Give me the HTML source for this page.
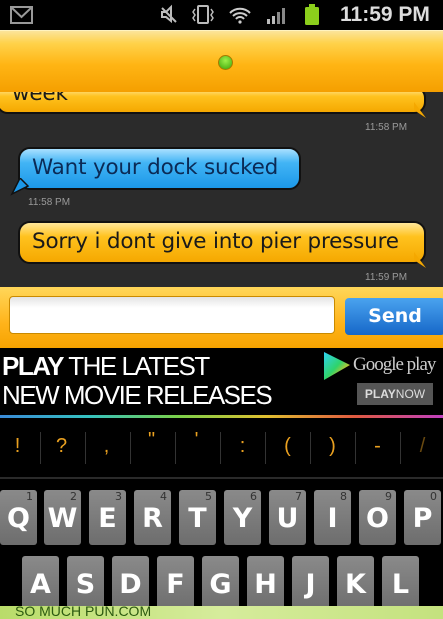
<!DOCTYPE html>
<html><head><style>
*{margin:0;padding:0;box-sizing:border-box}
body{width:443px;height:619px;overflow:hidden;background:#000;font-family:"Liberation Sans",sans-serif;position:relative}
.a{position:absolute}
.sb{top:0;left:0;width:443px;height:30px;background:#000}
.hdr{top:30px;left:0;width:443px;height:62px;background:linear-gradient(#fbe49a 0,#ffd24a 20%,#ffb514 55%,#f59f00 100%);border-top:1px solid #fff3c0}
.chat{top:92px;left:0;width:443px;height:195px;background:#2b2b2b}
.bub{border-radius:12px;border:2px solid #111;font-family:"DejaVu Sans",sans-serif;font-size:21.5px;color:#1a1a1a;padding-left:12px;line-height:38px;white-space:nowrap;letter-spacing:-0.2px}
.or{background:linear-gradient(#ffe79a 0,#ffc21e 35%,#f5a800 100%)}
.bl{background:linear-gradient(#a9e0ff 0,#42b4f5 35%,#1c98e8 100%);color:#0b2a55}
.ts{font-size:10px;color:#9a9a9a}
.inb{top:287px;left:0;width:443px;height:61px;background:linear-gradient(#ffd75a,#ffb31a 60%,#f6a300)}
.kb{position:absolute;width:37px;height:55px;background:linear-gradient(#8a8a8a,#6d6d6d);border-radius:3px;color:#fff;font-weight:bold;font-size:27px;text-align:center;line-height:58px;font-family:"DejaVu Sans",sans-serif}
.kb i{position:absolute;top:1px;right:4px;font-style:normal;font-size:11px;line-height:12px;color:#333;font-weight:normal}
.sym{position:absolute;top:435px;color:#e9a020;font-size:20px;width:45px;text-align:center}
.sep{position:absolute;top:432px;width:1px;height:32px;background:#333}
</style></head><body>
<div class="a sb"></div>
<svg class="a" style="left:10px;top:5px" width="24" height="20"><rect x="1" y="2" width="21" height="16" fill="none" stroke="#999" stroke-width="2"/><path d="M2 3 L11.5 12 L21 3" fill="none" stroke="#999" stroke-width="2"/></svg>
<svg class="a" style="left:158px;top:4px" width="170" height="22">
<path d="M4 4 L18 18 M4 8 h4 l5-5 v14 l-5-4 h-4z" stroke="#bbb" stroke-width="2" fill="none"/>
<rect x="40" y="2" width="10" height="17" rx="1" fill="none" stroke="#bbb" stroke-width="2"/><path d="M37 5 l-2 3 2 3 -2 3 2 3 M53 5 l2 3 -2 3 2 3 -2 3" stroke="#bbb" fill="none" stroke-width="1.5"/>
<path d="M72 9 a14 14 0 0 1 20 0 M75 12 a10 10 0 0 1 14 0 M78 15 a5 5 0 0 1 8 0" stroke="#ccc" stroke-width="2" fill="none"/><circle cx="82" cy="18" r="1.6" fill="#ccc"/>
<rect x="109" y="15" width="3" height="5" fill="#bbb"/><rect x="114" y="12" width="3" height="8" fill="#bbb"/><rect x="119" y="8" width="3" height="12" fill="#888"/><rect x="124" y="4" width="3" height="16" fill="#888"/>
<rect x="147" y="3" width="14" height="18" rx="1.5" fill="#8ccf1c"/><rect x="151" y="0" width="6" height="3" fill="#8ccf1c"/>
</svg>
<div class="a" style="left:340px;top:3px;color:#ddd;font-weight:bold;font-size:21px">11:59 PM</div>
<div class="a chat"></div>
<div class="a bub or" style="left:-4px;top:86px;width:430px;height:28px;line-height:12px;padding-left:14px;overflow:hidden">week</div>
<div class="a hdr"></div>
<div class="a" style="left:218px;top:55px;width:15px;height:15px;border-radius:50%;background:radial-gradient(circle at 50% 35%,#9ef04a,#3aa40a);border:1px solid #a77a00"></div>
<div class="a ts" style="left:365px;top:122px">11:58 PM</div>
<div class="a bub bl" style="left:18px;top:147px;width:283px;height:43px">Want your dock sucked</div>
<svg class="a" style="left:10px;top:178px" width="22" height="18"><path d="M10 0 L2 16 L18 8z" fill="#1c98e8" stroke="#111" stroke-width="1.5"/></svg>
<div class="a ts" style="left:28px;top:197px">11:58 PM</div>
<div class="a bub or" style="left:18px;top:221px;width:408px;height:43px">Sorry i dont give into pier pressure</div>
<svg class="a" style="left:412px;top:252px" width="18" height="20"><path d="M2 0 L14 16 L2 8z" fill="#f5a800"/></svg>
<svg class="a" style="left:412px;top:102px" width="18" height="20"><path d="M2 0 L14 16 L2 8z" fill="#f5a800"/></svg>
<div class="a ts" style="left:365px;top:272px">11:59 PM</div>
<div class="a inb"></div>
<div class="a" style="left:9px;top:296px;width:326px;height:38px;background:linear-gradient(#e4e4e4,#fff 30%);border-radius:4px;border:1px solid #c98a00"></div>
<div class="a" style="left:345px;top:298px;width:100px;height:37px;background:linear-gradient(#4aa3ef,#1667c8);border-radius:4px;color:#fff;font-weight:bold;font-size:19px;text-align:center;line-height:37px;font-family:'DejaVu Sans',sans-serif">Send</div>
<div class="a" style="left:0;top:348px;width:443px;height:70px;background:#000"></div>
<div class="a" style="left:2px;top:352px;color:#fff;font-size:26px;line-height:29px;letter-spacing:-1.5px;white-space:nowrap"><b>PLAY</b> THE LATEST<br>NEW MOVIE RELEASES</div>
<svg class="a" style="left:323px;top:351px" width="28" height="30"><path d="M1 1 L27 14 L1 29z" fill="url(#g)"/><defs><linearGradient id="g" x1="0" y1="0" x2="1" y2="1"><stop offset="0" stop-color="#2ed3f5"/><stop offset=".5" stop-color="#2fd36a"/><stop offset=".8" stop-color="#f4c01a"/><stop offset="1" stop-color="#e8463a"/></linearGradient></defs></svg>
<div class="a" style="left:353px;top:354px;color:#ccc;font-family:'Liberation Serif',serif;font-size:19px;letter-spacing:-1px">Google play</div>
<div class="a" style="left:357px;top:383px;width:76px;height:22px;background:#555;color:#ddd;font-size:12px;font-weight:bold;text-align:center;line-height:22px">PLAY<span style="font-weight:normal">NOW</span></div>
<div class="a" style="left:0;top:415px;width:443px;height:3px;background:linear-gradient(90deg,#3a8ad8,#35c2c0,#7ad04a,#e0c030,#e05a40,#c040c0)"></div>
<div class="sym" style="left:-5px">!</div><div class="sep" style="left:40px"></div>
<div class="sym" style="left:39px">?</div><div class="sep" style="left:85px"></div>
<div class="sym" style="left:84px">,</div><div class="sep" style="left:130px"></div>
<div class="sym" style="left:129px;top:429px">"</div><div class="sep" style="left:175px"></div>
<div class="sym" style="left:174px;top:429px">'</div><div class="sep" style="left:220px"></div>
<div class="sym" style="left:220px">:</div><div class="sep" style="left:265px"></div>
<div class="sym" style="left:265px">(</div><div class="sep" style="left:310px"></div>
<div class="sym" style="left:310px">)</div><div class="sep" style="left:355px"></div>
<div class="sym" style="left:355px">-</div><div class="sep" style="left:400px"></div>
<div class="sym" style="left:400px;color:#6a4a10">/</div>
<div class="a" style="left:0;top:477px;width:443px;height:2px;background:#2a2a2a"></div>
<div class="kb" style="left:0;top:490px">Q<i>1</i></div>
<div class="kb" style="left:44px;top:490px">W<i>2</i></div>
<div class="kb" style="left:89px;top:490px">E<i>3</i></div>
<div class="kb" style="left:134px;top:490px">R<i>4</i></div>
<div class="kb" style="left:179px;top:490px">T<i>5</i></div>
<div class="kb" style="left:224px;top:490px">Y<i>6</i></div>
<div class="kb" style="left:269px;top:490px">U<i>7</i></div>
<div class="kb" style="left:314px;top:490px">I<i>8</i></div>
<div class="kb" style="left:359px;top:490px">O<i>9</i></div>
<div class="kb" style="left:404px;top:490px">P<i>0</i></div>
<div class="kb" style="left:22px;top:556px">A</div>
<div class="kb" style="left:67px;top:556px">S</div>
<div class="kb" style="left:112px;top:556px">D</div>
<div class="kb" style="left:157px;top:556px">F</div>
<div class="kb" style="left:202px;top:556px">G</div>
<div class="kb" style="left:247px;top:556px">H</div>
<div class="kb" style="left:292px;top:556px">J</div>
<div class="kb" style="left:337px;top:556px">K</div>
<div class="kb" style="left:382px;top:556px">L</div>
<div class="a" style="left:0;top:606px;width:443px;height:13px;background:linear-gradient(90deg,#b9dc6a,#d6ec9c 50%,#c4e27e)"></div>
<div class="a" style="left:15px;top:604px;color:#2c5a10;font-size:14px;line-height:15px">SO MUCH PUN.COM</div>
</body></html>
